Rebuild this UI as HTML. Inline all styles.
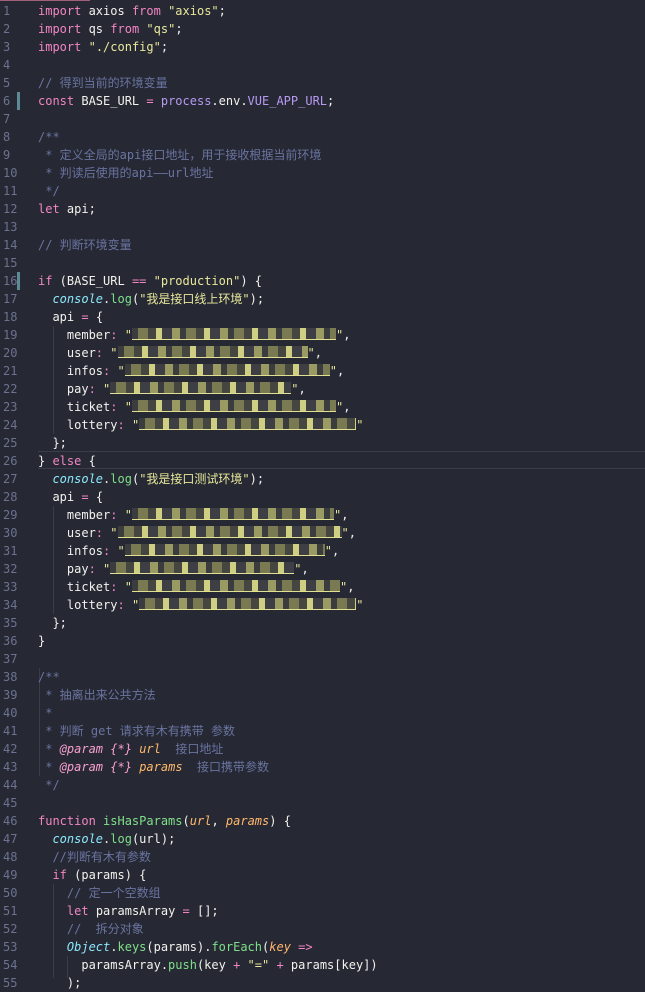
<!DOCTYPE html>
<html><head><meta charset="utf-8"><style>
body{margin:0;background:#262833;width:645px;height:978px;overflow:hidden;font-family:"DejaVu Sans Mono","Liberation Mono","Noto Sans CJK SC",monospace;font-size:12px;color:#f2f2ee}
.top{position:absolute;left:0;top:0;width:90px;height:1px;background:#a0607a}
.l{position:absolute;left:0;height:18px;line-height:18px;width:645px;white-space:pre}
.n{position:absolute;left:3px;color:#6c7290;width:30px}
.c{position:absolute;left:38px}
.k{color:#f286c4}.s{color:#e8e89c}.cm{color:#6a74a0}.p{color:#b79af2}.cy{color:#8be9fd;font-style:italic}.g{color:#7ee08a}.o{color:#ffb86c;font-style:italic}.ot{color:#f7a0d0}
.bar{position:absolute;left:17px;width:3px;height:18px;background:#5e8a96}
.hl{position:absolute;left:38px;width:607px;height:16px;border-top:1px solid #3b3d4a;border-bottom:1px solid #3b3d4a}
.b{display:inline-block;height:11px;vertical-align:-1px;border-bottom:1px solid #e0e090;background:repeating-linear-gradient(90deg,#3a3c3e 0 6px,#7a7a52 6px 16px,#44463f 16px 24px,#cfcf84 24px 30px,#3d3f45 30px 40px,#9a9a63 40px 48px)}
.ig{position:absolute;width:1px;background:#3a3c48}
</style></head><body>
<div class="top"></div>
<div class="hl" style="top:451px"></div>
<div class="bar" style="top:92px"></div>
<div class="bar" style="top:272px"></div>
<div class="ig" style="left:53px;top:326px;height:108px"></div>
<div class="ig" style="left:53px;top:506px;height:108px"></div>
<div class="ig" style="left:39px;top:668px;height:108px"></div>
<div class="ig" style="left:53px;top:884px;height:94px"></div>
<div class="ig" style="left:67px;top:956px;height:22px"></div>
<div id="code"></div>
<script>
const B=w=>`<span class="b" style="width:${w}px"></span>`;
const L=[
'<span class="k">import</span> axios <span class="k">from</span> <span class="s">"axios"</span>;',
'<span class="k">import</span> qs <span class="k">from</span> <span class="s">"qs"</span>;',
'<span class="k">import</span> <span class="s">"./config"</span>;',
'',
'<span class="cm">// 得到当前的环境变量</span>',
'<span class="k">const</span> BASE_URL <span class="k">=</span> <span class="p">process</span>.env.<span class="p">VUE_APP_URL</span>;',
'',
'<span class="cm">/**</span>',
'<span class="cm"> * 定义全局的api接口地址，用于接收根据当前环境</span>',
'<span class="cm"> * 判读后使用的api——url地址</span>',
'<span class="cm"> */</span>',
'<span class="k">let</span> api;',
'',
'<span class="cm">// 判断环境变量</span>',
'',
'<span class="k">if</span> (BASE_URL <span class="k">==</span> <span class="s">"production"</span>) {',
'  <span class="cy">console</span>.<span class="g">log</span>(<span class="s">"我是接口线上环境"</span>);',
'  api <span class="k">=</span> {',
'    member<span class="k">:</span> <span class="s">"</span>'+B(204)+'<span class="s">"</span>,',
'    user<span class="k">:</span> <span class="s">"</span>'+B(190)+'<span class="s">"</span>,',
'    infos<span class="k">:</span> <span class="s">"</span>'+B(205)+'<span class="s">"</span>,',
'    pay<span class="k">:</span> <span class="s">"</span>'+B(181)+'<span class="s">"</span>,',
'    ticket<span class="k">:</span> <span class="s">"</span>'+B(204)+'<span class="s">"</span>,',
'    lottery<span class="k">:</span> <span class="s">"</span>'+B(217)+'<span class="s">"</span>',
'  };',
'} <span class="k">else</span> {',
'  <span class="cy">console</span>.<span class="g">log</span>(<span class="s">"我是接口测试环境"</span>);',
'  api <span class="k">=</span> {',
'    member<span class="k">:</span> <span class="s">"</span>'+B(202)+'<span class="s">"</span>,',
'    user<span class="k">:</span> <span class="s">"</span>'+B(224)+'<span class="s">"</span>,',
'    infos<span class="k">:</span> <span class="s">"</span>'+B(200)+'<span class="s">"</span>,',
'    pay<span class="k">:</span> <span class="s">"</span>'+B(184)+'<span class="s">"</span>,',
'    ticket<span class="k">:</span> <span class="s">"</span>'+B(208)+'<span class="s">"</span>,',
'    lottery<span class="k">:</span> <span class="s">"</span>'+B(217)+'<span class="s">"</span>',
'  };',
'}',
'',
'<span class="cm">/**</span>',
'<span class="cm"> * 抽离出来公共方法</span>',
'<span class="cm"> *</span>',
'<span class="cm"> * 判断 get 请求有木有携带 参数</span>',
'<span class="cm"> * </span><span class="ot" style="font-style:italic">@param</span> <span class="ot" style="font-style:italic">{*}</span> <span class="o">url</span>  <span class="cm">接口地址</span>',
'<span class="cm"> * </span><span class="ot" style="font-style:italic">@param</span> <span class="ot" style="font-style:italic">{*}</span> <span class="o">params</span>  <span class="cm">接口携带参数</span>',
'<span class="cm"> */</span>',
'',
'<span class="k">function</span> <span class="g">isHasParams</span>(<span class="o">url</span>, <span class="o">params</span>) {',
'  <span class="cy">console</span>.<span class="g">log</span>(url);',
'  <span class="cm">//判断有木有参数</span>',
'  <span class="k">if</span> (params) {',
'    <span class="cm">// 定一个空数组</span>',
'    <span class="k">let</span> paramsArray <span class="k">=</span> [];',
'    <span class="cm">//  拆分对象</span>',
'    <span class="cy">Object</span>.<span class="g">keys</span>(params).<span class="g">forEach</span>(<span class="o">key</span> <span class="k">=&gt;</span>',
'      paramsArray.<span class="g">push</span>(key <span class="k">+</span> <span class="s">"="</span> <span class="k">+</span> params[key])',
'    );'
];
let h='';
L.forEach((t,i)=>{h+=`<div class="l" style="top:${2+18*i}px"><span class="n">${i+1}</span><span class="c">${t}</span></div>`;});
document.getElementById('code').innerHTML=h;
</script>
</body></html>
